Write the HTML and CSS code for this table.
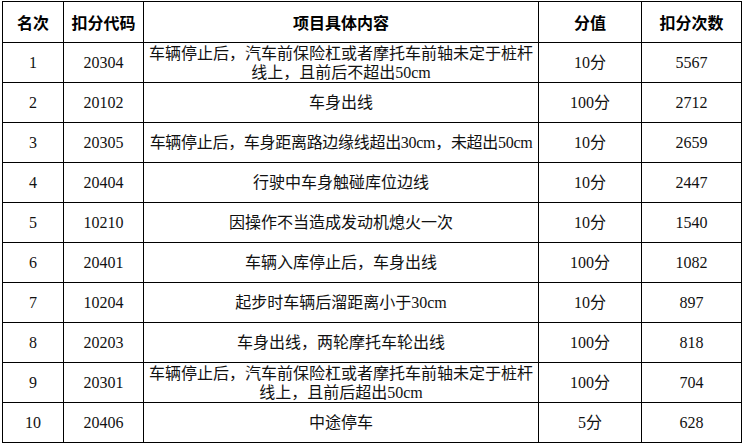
FILE: index.html
```html
<!DOCTYPE html>
<html lang="zh-CN">
<head>
<meta charset="utf-8">
<title>扣分统计</title>
<link rel="stylesheet" href="styles.css">
</head>
<body>
<table class="stats">
  <colgroup>
    <col class="c-rank">
    <col class="c-code">
    <col class="c-desc">
    <col class="c-score">
    <col class="c-count">
  </colgroup>
  <thead>
    <tr><th>名次</th><th>扣分代码</th><th>项目具体内容</th><th>分值</th><th>扣分次数</th></tr>
  </thead>
  <tbody>
    <tr><td>1</td><td>20304</td><td class="two"><span class="ln">车辆停止后，汽车前保险杠或者摩托车前轴未定于桩杆</span><span class="ln">线上，且前后不超出50cm</span></td><td>10分</td><td>5567</td></tr>
    <tr><td>2</td><td>20102</td><td>车身出线</td><td>100分</td><td>2712</td></tr>
    <tr><td>3</td><td>20305</td><td class="tight">车辆停止后，车身距离路边缘线超出30cm，未超出50cm</td><td>10分</td><td>2659</td></tr>
    <tr><td>4</td><td>20404</td><td>行驶中车身触碰库位边线</td><td>10分</td><td>2447</td></tr>
    <tr><td>5</td><td>10210</td><td>因操作不当造成发动机熄火一次</td><td>10分</td><td>1540</td></tr>
    <tr><td>6</td><td>20401</td><td>车辆入库停止后，车身出线</td><td>100分</td><td>1082</td></tr>
    <tr><td>7</td><td>10204</td><td>起步时车辆后溜距离小于30cm</td><td>10分</td><td>897</td></tr>
    <tr><td>8</td><td>20203</td><td>车身出线，两轮摩托车轮出线</td><td>100分</td><td>818</td></tr>
    <tr><td>9</td><td>20301</td><td class="two"><span class="ln">车辆停止后，汽车前保险杠或者摩托车前轴未定于桩杆</span><span class="ln">线上，且前后超出50cm</span></td><td>100分</td><td>704</td></tr>
    <tr><td>10</td><td>20406</td><td>中途停车</td><td>5分</td><td>628</td></tr>
  </tbody>
</table>
</body>
</html>
```

FILE: styles.css
```css
html, body {
  margin: 0;
  padding: 0;
  background: #fff;
}

.stats {
  margin: 1px 0 0 2px;
  border-collapse: collapse;
  table-layout: fixed;
  width: 740px;
  font-family: "Liberation Serif", "Noto Sans CJK SC", serif;
  font-size: 16px;
  color: #111;
}

.c-rank { width: 61px; }
.c-code { width: 80px; }
.c-desc { width: 395px; }
.c-score { width: 103px; }
.c-count { width: 100px; }

.stats th,
.stats td {
  border: 1px solid #000;
  padding: 0 3px;
  text-align: center;
  vertical-align: middle;
  line-height: 20px;
  white-space: nowrap;
  overflow: hidden;
  box-sizing: border-box;
}

.stats th {
  height: 41px;
  font-family: "Noto Sans CJK SC", sans-serif;
  font-weight: bold;
  color: #000;
}

.stats td {
  height: 40px;
}

.stats td.two {
  padding-top: 0;
  padding-bottom: 0;
}

.stats .ln {
  display: block;
  height: 19px;
  line-height: 19px;
  overflow: visible;
}

.stats td.tight {
  letter-spacing: -0.3px;
}
```
